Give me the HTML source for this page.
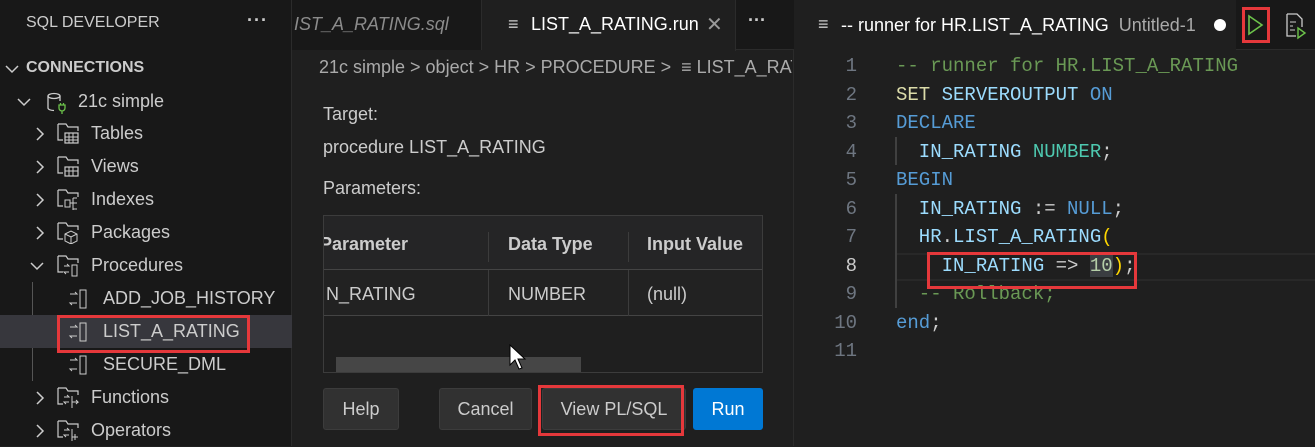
<!DOCTYPE html>
<html><head><meta charset="utf-8"><style>
*{margin:0;padding:0;box-sizing:border-box}
body{width:1315px;height:446px;overflow:hidden;background:#1f1f1f;font-family:"Liberation Sans",sans-serif;color:#cccccc;position:relative}
.a{position:absolute;white-space:nowrap}
.side{left:0;top:0;width:292px;height:446px;background:#181818;border-right:1px solid #2b2b2b}
.row{position:absolute;left:0;width:292px;height:33px;font-size:18px;line-height:33px;color:#cccccc}
.chev{position:absolute;top:9px}
.mid{left:292px;top:0;width:502px;height:446px;background:#1f1f1f;border-right:1px solid #2b2b2b}
.ln{position:absolute;width:62px;text-align:right;color:#6e7681;font-family:"Liberation Mono",monospace;font-size:19px}
.cl{position:absolute;left:896px;font-family:"Liberation Mono",monospace;font-size:19px;color:#cccccc}
.btn{position:absolute;top:388px;height:42px;background:#313131;border:1px solid #3c3c3c;border-radius:3px;font-size:18px;line-height:40px;text-align:center;color:#cccccc}
.red{position:absolute;border:3px solid #e5383b}
</style></head><body>
<div class="a side"></div>
<div class="a" style="left:26px;top:14px;font-size:16px;color:#cccccc">SQL DEVELOPER</div>
<div class="a" style="left:247px;top:10px;font-size:18px;letter-spacing:1px;font-weight:bold">···</div>
<svg class="a" style="left:4px;top:61px" width="16" height="16"><path d="M2 5l6 6 6-6" fill="none" stroke="#ccc" stroke-width="1.5"/></svg>
<div class="a" style="left:26px;top:59px;font-size:16px;font-weight:bold">CONNECTIONS</div>

<div class="row" style="top:85px"><svg class="chev" style="left:16px" width="16" height="16"><path d="M2 5l6 6 6-6" fill="none" stroke="#ccc" stroke-width="1.5"/></svg>
<svg class="a" style="left:46px;top:7px" width="22" height="22" viewBox="0 0 22 22"><ellipse cx="8" cy="4" rx="6" ry="2.5" fill="none" stroke="#ccc" stroke-width="1.3"/><path d="M2 4v12c0 1.5 3 2.5 6 2.5M14 4v5" fill="none" stroke="#ccc" stroke-width="1.3"/><path d="M13 13h6v3a3 3 0 0 1-6 0zM14.5 11v2M17.5 11v2M16 19v3" fill="none" stroke="#6cc24a" stroke-width="1.3"/></svg>
<span class="a" style="left:78px">21c simple</span></div>

<div class="row" style="top:117px"><svg class="chev" style="left:32px" width="16" height="16"><path d="M5 2l6 6-6 6" fill="none" stroke="#ccc" stroke-width="1.5"/></svg><svg class="a" style="left:57px;top:6px" width="24" height="22"><path d="M1 1h8l2 3h10v4M1 1v16h5" fill="none" stroke="#ccc" stroke-width="1.2"/><rect x="8" y="10" width="13" height="10" fill="none" stroke="#ccc" stroke-width="1.2"/><path d="M8 14h13M8 17h13M12 10v10M16 10v10" stroke="#ccc" stroke-width="1"/></svg><span class="a" style="left:91px">Tables</span></div>
<div class="row" style="top:150px"><svg class="chev" style="left:32px" width="16" height="16"><path d="M5 2l6 6-6 6" fill="none" stroke="#ccc" stroke-width="1.5"/></svg><svg class="a" style="left:57px;top:6px" width="24" height="22"><path d="M1 1h8l2 3h10v4M1 1v16h5" fill="none" stroke="#ccc" stroke-width="1.2"/><rect x="8" y="11" width="13" height="9" fill="none" stroke="#ccc" stroke-width="1.2"/><path d="M8 15h13M12 11v9M16 11v9" stroke="#ccc"/></svg><span class="a" style="left:91px">Views</span></div>
<div class="row" style="top:183px"><svg class="chev" style="left:32px" width="16" height="16"><path d="M5 2l6 6-6 6" fill="none" stroke="#ccc" stroke-width="1.5"/></svg><svg class="a" style="left:57px;top:6px" width="24" height="22"><path d="M1 1h8l2 3h10v4M1 1v16h5" fill="none" stroke="#ccc" stroke-width="1.2"/><rect x="8" y="11" width="5" height="7" fill="none" stroke="#ccc"/><path d="M13 14h3M16 9v12M16 9h4M16 14h4M16 20h4" stroke="#ccc" fill="none"/></svg><span class="a" style="left:91px">Indexes</span></div>
<div class="row" style="top:216px"><svg class="chev" style="left:32px" width="16" height="16"><path d="M5 2l6 6-6 6" fill="none" stroke="#ccc" stroke-width="1.5"/></svg><svg class="a" style="left:57px;top:6px" width="24" height="22"><path d="M1 1h8l2 3h10v4M1 1v16h5" fill="none" stroke="#ccc" stroke-width="1.2"/><path d="M8 12l6-3 6 3v7l-6 3-6-3zM8 12l6 3 6-3M14 15v7" fill="none" stroke="#ccc"/></svg><span class="a" style="left:91px">Packages</span></div>
<div class="row" style="top:249px"><svg class="chev" style="left:29px" width="16" height="16"><path d="M2 5l6 6 6-6" fill="none" stroke="#ccc" stroke-width="1.5"/></svg><svg class="a" style="left:57px;top:6px" width="24" height="22"><path d="M1 1h8l2 3h10v4M1 1v16h5" fill="none" stroke="#ccc" stroke-width="1.2"/><rect x="15" y="10" width="5" height="11" fill="none" stroke="#ccc"/><path d="M7 11h5l-2-2M12 17H7l2 2" fill="none" stroke="#ccc"/></svg><span class="a" style="left:91px">Procedures</span></div>
<div class="a" style="left:32px;top:282px;width:1px;height:99px;background:#555"></div>
<div class="row" style="top:282px"><svg class="a" style="left:68px;top:6px" width="24" height="22"><rect x="12" y="2" width="6" height="18" fill="none" stroke="#ccc"/><path d="M2 6h7l-2-2M9 15H2l2 2" fill="none" stroke="#ccc"/></svg><span class="a" style="left:103px">ADD_JOB_HISTORY</span></div>
<div class="row" style="top:315px;background:#37373d"><svg class="a" style="left:68px;top:6px" width="24" height="22"><rect x="12" y="2" width="6" height="18" fill="none" stroke="#ccc"/><path d="M2 6h7l-2-2M9 15H2l2 2" fill="none" stroke="#ccc"/></svg><span class="a" style="left:103px">LIST_A_RATING</span></div>
<div class="red" style="left:57px;top:315px;width:193px;height:38px"></div>
<div class="row" style="top:348px"><svg class="a" style="left:68px;top:6px" width="24" height="22"><rect x="12" y="2" width="6" height="18" fill="none" stroke="#ccc"/><path d="M2 6h7l-2-2M9 15H2l2 2" fill="none" stroke="#ccc"/></svg><span class="a" style="left:103px">SECURE_DML</span></div>
<div class="row" style="top:381px"><svg class="chev" style="left:32px" width="16" height="16"><path d="M5 2l6 6-6 6" fill="none" stroke="#ccc" stroke-width="1.5"/></svg><svg class="a" style="left:57px;top:6px" width="24" height="22"><path d="M1 1h8l2 3h10v4M1 1v16h5" fill="none" stroke="#ccc" stroke-width="1.2"/><path d="M7 10h5l-2-2M12 15H7l2 2M15 9v12M15 15h6l-2-2M21 15l-2 2" fill="none" stroke="#ccc"/></svg><span class="a" style="left:91px">Functions</span></div>
<div class="row" style="top:414px"><svg class="chev" style="left:32px" width="16" height="16"><path d="M5 2l6 6-6 6" fill="none" stroke="#ccc" stroke-width="1.5"/></svg><svg class="a" style="left:57px;top:6px" width="24" height="22"><path d="M1 1h8l2 3h10v4M1 1v16h5" fill="none" stroke="#ccc" stroke-width="1.2"/><path d="M7 10h5l-2-2M12 15H7l2 2M15 9v12M18 14v6M15 17h6" fill="none" stroke="#ccc"/></svg><span class="a" style="left:91px">Operators</span></div>

<div class="a mid"></div>
<div class="a" style="left:292px;top:0;width:502px;height:50px;background:#181818;border-bottom:1px solid #2b2b2b"></div>
<div class="a" style="left:292px;top:0;width:190px;height:50px;background:#181818;border-right:1px solid #2b2b2b;overflow:hidden"><span class="a" style="left:2px;top:14px;font-size:18px;font-style:italic;color:#8b8b8b">IST_A_RATING.sql</span></div>
<div class="a" style="left:482px;top:0;width:254px;height:51px;background:#1f1f1f;border-right:1px solid #2b2b2b"></div>
<div class="a" style="left:508px;top:14px;font-size:18px;color:#ccc">&#8801;</div>
<div class="a" style="left:531px;top:14px;font-size:18px;color:#fff">LIST_A_RATING.run</div>
<div class="a" style="left:706px;top:12px;font-size:20px;color:#999">✕</div>
<div class="a" style="left:748px;top:10px;font-size:18px;font-weight:bold">···</div>
<div class="a" style="left:319px;top:57px;font-size:18px;color:#aaaaaa;width:473px;overflow:hidden">21c simple &gt; object &gt; HR &gt; PROCEDURE &gt; &nbsp;&#8801; LIST_A_RATING</div>
<div class="a" style="left:323px;top:104px;font-size:18px">Target:</div>
<div class="a" style="left:323px;top:137px;font-size:18px">procedure LIST_A_RATING</div>
<div class="a" style="left:323px;top:178px;font-size:18px">Parameters:</div>
<div class="a" style="left:323px;top:215px;width:440px;height:158px;border:1px solid #3c3c3c;background:#1f1f1f;overflow:hidden">
<div class="a" style="left:0;top:0;width:440px;height:54px;background:#252526;border-bottom:1px solid #444"></div>
<div class="a" style="left:-4px;top:18px;font-size:18px;font-weight:bold">Parameter</div>
<div class="a" style="left:164px;top:16px;width:1px;height:30px;background:#3c3c3c"></div>
<div class="a" style="left:184px;top:18px;font-size:18px;font-weight:bold">Data Type</div>
<div class="a" style="left:304px;top:16px;width:1px;height:30px;background:#3c3c3c"></div>
<div class="a" style="left:323px;top:18px;font-size:18px;font-weight:bold">Input Value</div>
<div class="a" style="left:0;top:54px;width:440px;height:46px;background:#222;border-bottom:1px solid #444"></div>
<div class="a" style="left:164px;top:54px;width:1px;height:46px;background:#3c3c3c"></div>
<div class="a" style="left:304px;top:54px;width:1px;height:46px;background:#3c3c3c"></div>
<div class="a" style="left:2px;top:68px;font-size:18px">N_RATING</div>
<div class="a" style="left:184px;top:68px;font-size:18px">NUMBER</div>
<div class="a" style="left:323px;top:68px;font-size:18px">(null)</div>
<div class="a" style="left:12px;top:141px;width:245px;height:16px;background:#464646"></div>
</div>
<svg class="a" style="left:509px;top:344px" width="20" height="28"><path d="M1 1v20l5-5 4 9 3-1-4-9h7z" fill="#fff" stroke="#000" stroke-width="1"/></svg>
<div class="btn" style="left:323px;width:76px">Help</div>
<div class="btn" style="left:439px;width:93px">Cancel</div>
<div class="btn" style="left:542px;width:144px">View PL/SQL</div>
<div class="btn" style="left:693px;width:70px;background:#0078d4;border-color:#0078d4;color:#fff">Run</div>
<div class="red" style="left:538px;top:385px;width:146px;height:51px"></div>

<div class="a" style="left:818px;top:14px;font-size:18px;color:#ccc">&#8801;</div>
<div class="a" style="left:841px;top:15px;font-size:18px;color:#fff">-- runner for HR.LIST_A_RATING <span style="color:#aaa">&nbsp;Untitled-1</span></div>
<div class="a" style="left:1214px;top:19px;width:12px;height:12px;border-radius:50%;background:#fff"></div>
<div class="a" style="left:1236px;top:0;width:79px;height:50px;background:#181818;border-bottom:1px solid #2b2b2b"></div>
<div class="red" style="left:1242px;top:7px;width:28px;height:36px"></div>
<svg class="a" style="left:1247px;top:14px" width="18" height="22"><path d="M2 2l13 9-13 9z" fill="none" stroke="#6cc24a" stroke-width="1.6"/></svg>
<svg class="a" style="left:1285px;top:12px" width="26" height="28"><path d="M2 2h10l5 5v8M2 2v22h9" fill="none" stroke="#ccc" stroke-width="1.3"/><path d="M5 10h6M5 14h3M5 18h5" stroke="#ccc"/><path d="M13 16l7 5-7 5z" fill="none" stroke="#6cc24a" stroke-width="1.4"/></svg>

<div class="a" style="left:895px;top:253px;width:420px;height:28px;border-top:2px solid #282828;border-bottom:2px solid #282828"></div>
<div class="a" style="left:895px;top:137px;width:2px;height:28px;background:#404040"></div>
<div class="a" style="left:895px;top:194px;width:2px;height:114px;background:#404040"></div>
<div class="ln" style="left:795px;top:55px">1</div>
<div class="ln" style="left:795px;top:84px">2</div>
<div class="ln" style="left:795px;top:112px">3</div>
<div class="ln" style="left:795px;top:141px">4</div>
<div class="ln" style="left:795px;top:169px">5</div>
<div class="ln" style="left:795px;top:198px">6</div>
<div class="ln" style="left:795px;top:226px">7</div>
<div class="ln" style="left:795px;top:255px;color:#ccc">8</div>
<div class="ln" style="left:795px;top:283px">9</div>
<div class="ln" style="left:795px;top:312px">10</div>
<div class="ln" style="left:795px;top:340px">11</div>
<div class="cl" style="top:55px;color:#6a9955">-- runner for HR.LIST_A_RATING</div>
<div class="cl" style="top:84px"><span style="color:#dcdcaa">SET</span> <span style="color:#9cdcfe">SERVEROUTPUT</span> <span style="color:#569cd6">ON</span></div>
<div class="cl" style="top:112px;color:#569cd6">DECLARE</div>
<div class="cl" style="top:141px"><span style="color:#9cdcfe">&nbsp;&nbsp;IN_RATING</span> <span style="color:#4ec9b0">NUMBER</span>;</div>
<div class="cl" style="top:169px;color:#569cd6">BEGIN</div>
<div class="cl" style="top:198px"><span style="color:#9cdcfe">&nbsp;&nbsp;IN_RATING</span> := <span style="color:#569cd6">NULL</span>;</div>
<div class="cl" style="top:226px"><span style="color:#9cdcfe">&nbsp;&nbsp;HR</span>.<span style="color:#9cdcfe">LIST_A_RATING</span><span style="color:#ffd700">(</span></div>
<div class="cl" style="top:255px"><span style="color:#9cdcfe">&nbsp;&nbsp;&nbsp;&nbsp;IN_RATING</span> =&gt; <span style="color:#b5cea8;background:#3a3d41">10</span><span style="color:#ffd700">)</span>;</div>
<div class="cl" style="top:283px;color:#6a9955">&nbsp;&nbsp;-- Rollback;</div>
<div class="cl" style="top:312px;color:#569cd6">end<span style="color:#ccc">;</span></div>
<div class="red" style="left:927px;top:252px;width:210px;height:37px"></div>
</body></html>
